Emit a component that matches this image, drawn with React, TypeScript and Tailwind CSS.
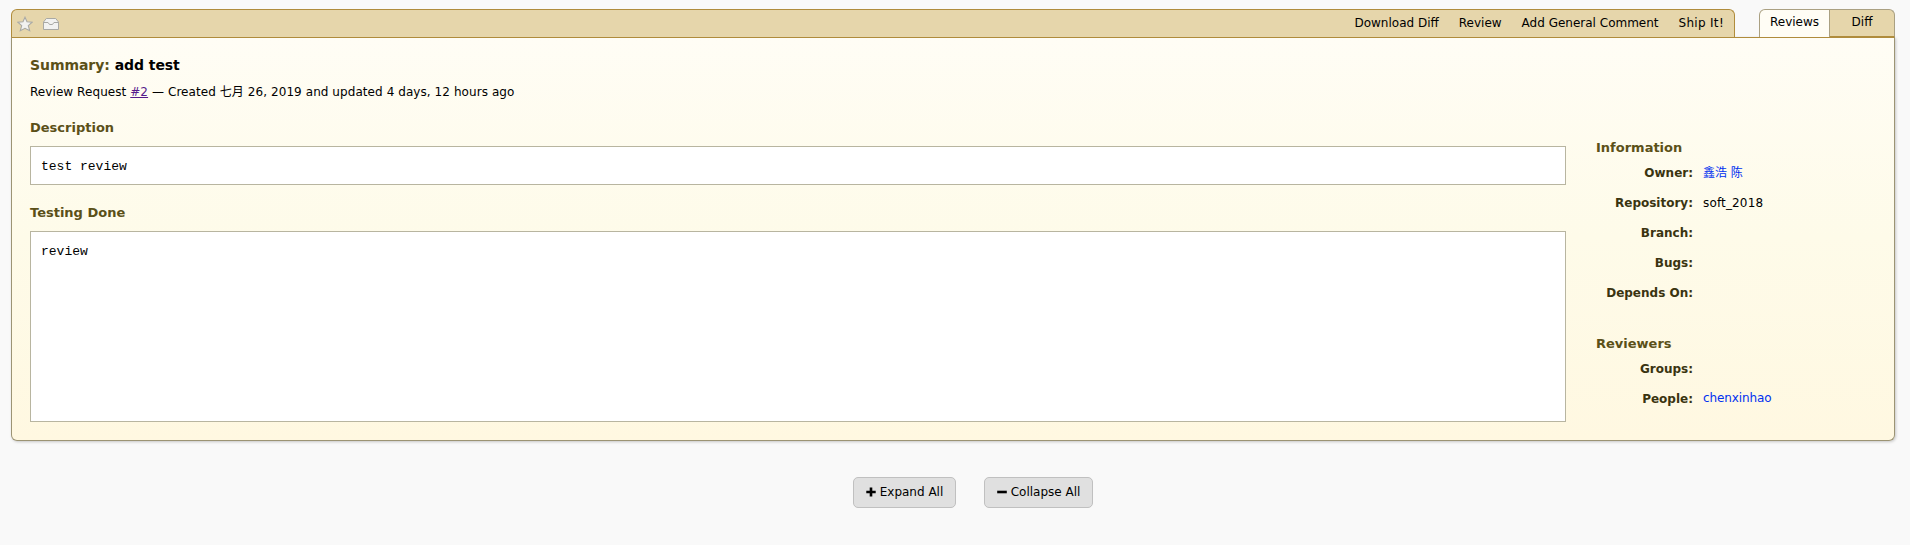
import React from "react";

type FieldProps = { label: string; children?: React.ReactNode };

const Field = ({ label, children }: FieldProps) => (
  <div className="flex h-[30px] items-start gap-[10px] leading-[16px]">
    <dt className="w-[97px] whitespace-nowrap text-right font-bold text-[#3a3410]">
      {label}
    </dt>
    <dd>{children}</dd>
  </div>
);

const Heading = ({ children }: { children: React.ReactNode }) => (
  <h3 className="text-[13px] font-bold leading-[16px] text-[#5b5018]">{children}</h3>
);

const StarIcon = () => (
  <svg width="16" height="16" viewBox="0 0 16 16" fill="#f2f2f0" stroke="#a9a9a4" strokeWidth="1.1">
    <path d="M8 1.2 10 5.7 15.2 6.2 11.3 9.6 12.7 14.7 8 12.3 3.3 14.7 4.7 9.6 .8 6.2 6 5.7Z" />
  </svg>
);

const InboxIcon = () => (
  <svg width="16" height="14" viewBox="0 0 16 14" fill="#f2f2f0" stroke="#a9a9a4" strokeLinejoin="round">
    <path d="M.5 5 3.3 1.5H12.7L15.5 5V12.5H.5Z" />
    <path d="M.5 5.5H5C5.6 5.5 5.6 7.5 7 7.5H9C10.4 7.5 10.4 5.5 11 5.5H15.5" fill="none" />
  </svg>
);

export default function App() {
  return (
    <div className="h-[545px] bg-[#f9f9f9] pl-[11px] pr-[15px] pt-[9px] font-['DejaVu_Sans','Noto_Sans_CJK_SC',sans-serif] text-[12px] text-black">
      <div className="flex h-[28px] justify-between">
        <div className="flex w-[1724px] items-center justify-between rounded-t-[6px] border border-b-0 border-[#b08c3c] bg-[#e6d6ab] pl-[5px] pr-[10px]">
          <div className="flex items-center gap-[10px]">
            <StarIcon />
            <InboxIcon />
          </div>
          <nav className="flex gap-[20px] whitespace-nowrap pb-[2px] leading-[16px]">
            <a>Download Diff</a>
            <a>Review</a>
            <a>Add General Comment</a>
            <a className="tracking-[0.3px]">Ship It!</a>
          </nav>
        </div>
        <div className="flex w-[136px] text-center leading-[24px]">
          <a className="w-[71px] rounded-tl-[6px] border border-b-0 border-[#aaa082] bg-[#fffdf5]">Reviews</a>
          <a className="w-[65px] rounded-tr-[6px] border border-b border-l-0 border-[#aaa082] border-b-[#b08c3c] bg-[#e6d6ab]">Diff</a>
        </div>
      </div>
      <main className="flex h-[404px] gap-[30px] rounded-b-[6px] border border-[#9c9474] border-t-[#b08c3c] bg-linear-to-b from-[#fffdf5] via-[#fefbe9] to-[#fff8e1] pl-[18px] pt-[19px] shadow-[1px_1px_3px_rgba(0,0,0,0.2)]">
        <section className="w-[1536px]">
          <h1 className="text-[14px] font-bold leading-[16px] tracking-[-0.06px]">
            <span className="text-[#5b5018]">Summary:</span> add test
          </h1>
          <p className="mt-[11px] leading-[16px] tracking-[0.07px]">
            Review Request <a className="text-[#551a8b] underline">#2</a> — Created 七月 26, 2019 and updated 4 days, 12 hours ago
          </p>
          <div className="mt-[20px]"><Heading>Description</Heading></div>
          <pre className="mt-[10px] h-[39px] border border-[#b8b5a0] bg-white px-[10px] py-[12px] font-['Liberation_Mono',monospace] text-[13px] leading-[16px]">test review</pre>
          <div className="mt-[20px]"><Heading>Testing Done</Heading></div>
          <pre className="mt-[10px] h-[191px] border border-[#b8b5a0] bg-white px-[10px] py-[12px] font-['Liberation_Mono',monospace] text-[13px] leading-[16px]">review</pre>
        </section>
        <aside className="pt-[83px]">
          <Heading>Information</Heading>
          <dl className="mt-[9px]">
            <Field label="Owner:"><a className="text-[#0030f0]">鑫浩 陈</a></Field>
            <Field label="Repository:"><span className="tracking-[0.15px]">soft_2018</span></Field>
            <Field label="Branch:" />
            <Field label="Bugs:" />
            <Field label="Depends On:" />
          </dl>
          <div className="mt-[21px]"><Heading>Reviewers</Heading></div>
          <dl className="mt-[9px]">
            <Field label="Groups:" />
            <Field label="People:"><a className="block leading-[14px] tracking-[-0.1px] text-[#0030f0]">chenxinhao</a></Field>
          </dl>
        </aside>
      </main>
      <div className="ml-[842px] mt-[36px] flex gap-[28px]">
        <button className="flex h-[31px] w-[103px] items-center justify-center gap-[4px] whitespace-nowrap rounded-[5px] border border-[#c0c0c0] bg-[#e0e0e0] pb-px">
          <svg width="10" height="10" viewBox="0 0 10 10"><path d="M5 .5V9.5M.3 5H9.7" stroke="black" strokeWidth="2.6" /></svg>
          Expand All
        </button>
        <button className="flex h-[31px] w-[109px] items-center justify-center gap-[4px] whitespace-nowrap rounded-[5px] border border-[#c0c0c0] bg-[#e0e0e0] pb-px">
          <svg width="10" height="10" viewBox="0 0 10 10"><path d="M.2 5H9.8" stroke="black" strokeWidth="2.6" /></svg>
          Collapse All
        </button>
      </div>
    </div>
  );
}
